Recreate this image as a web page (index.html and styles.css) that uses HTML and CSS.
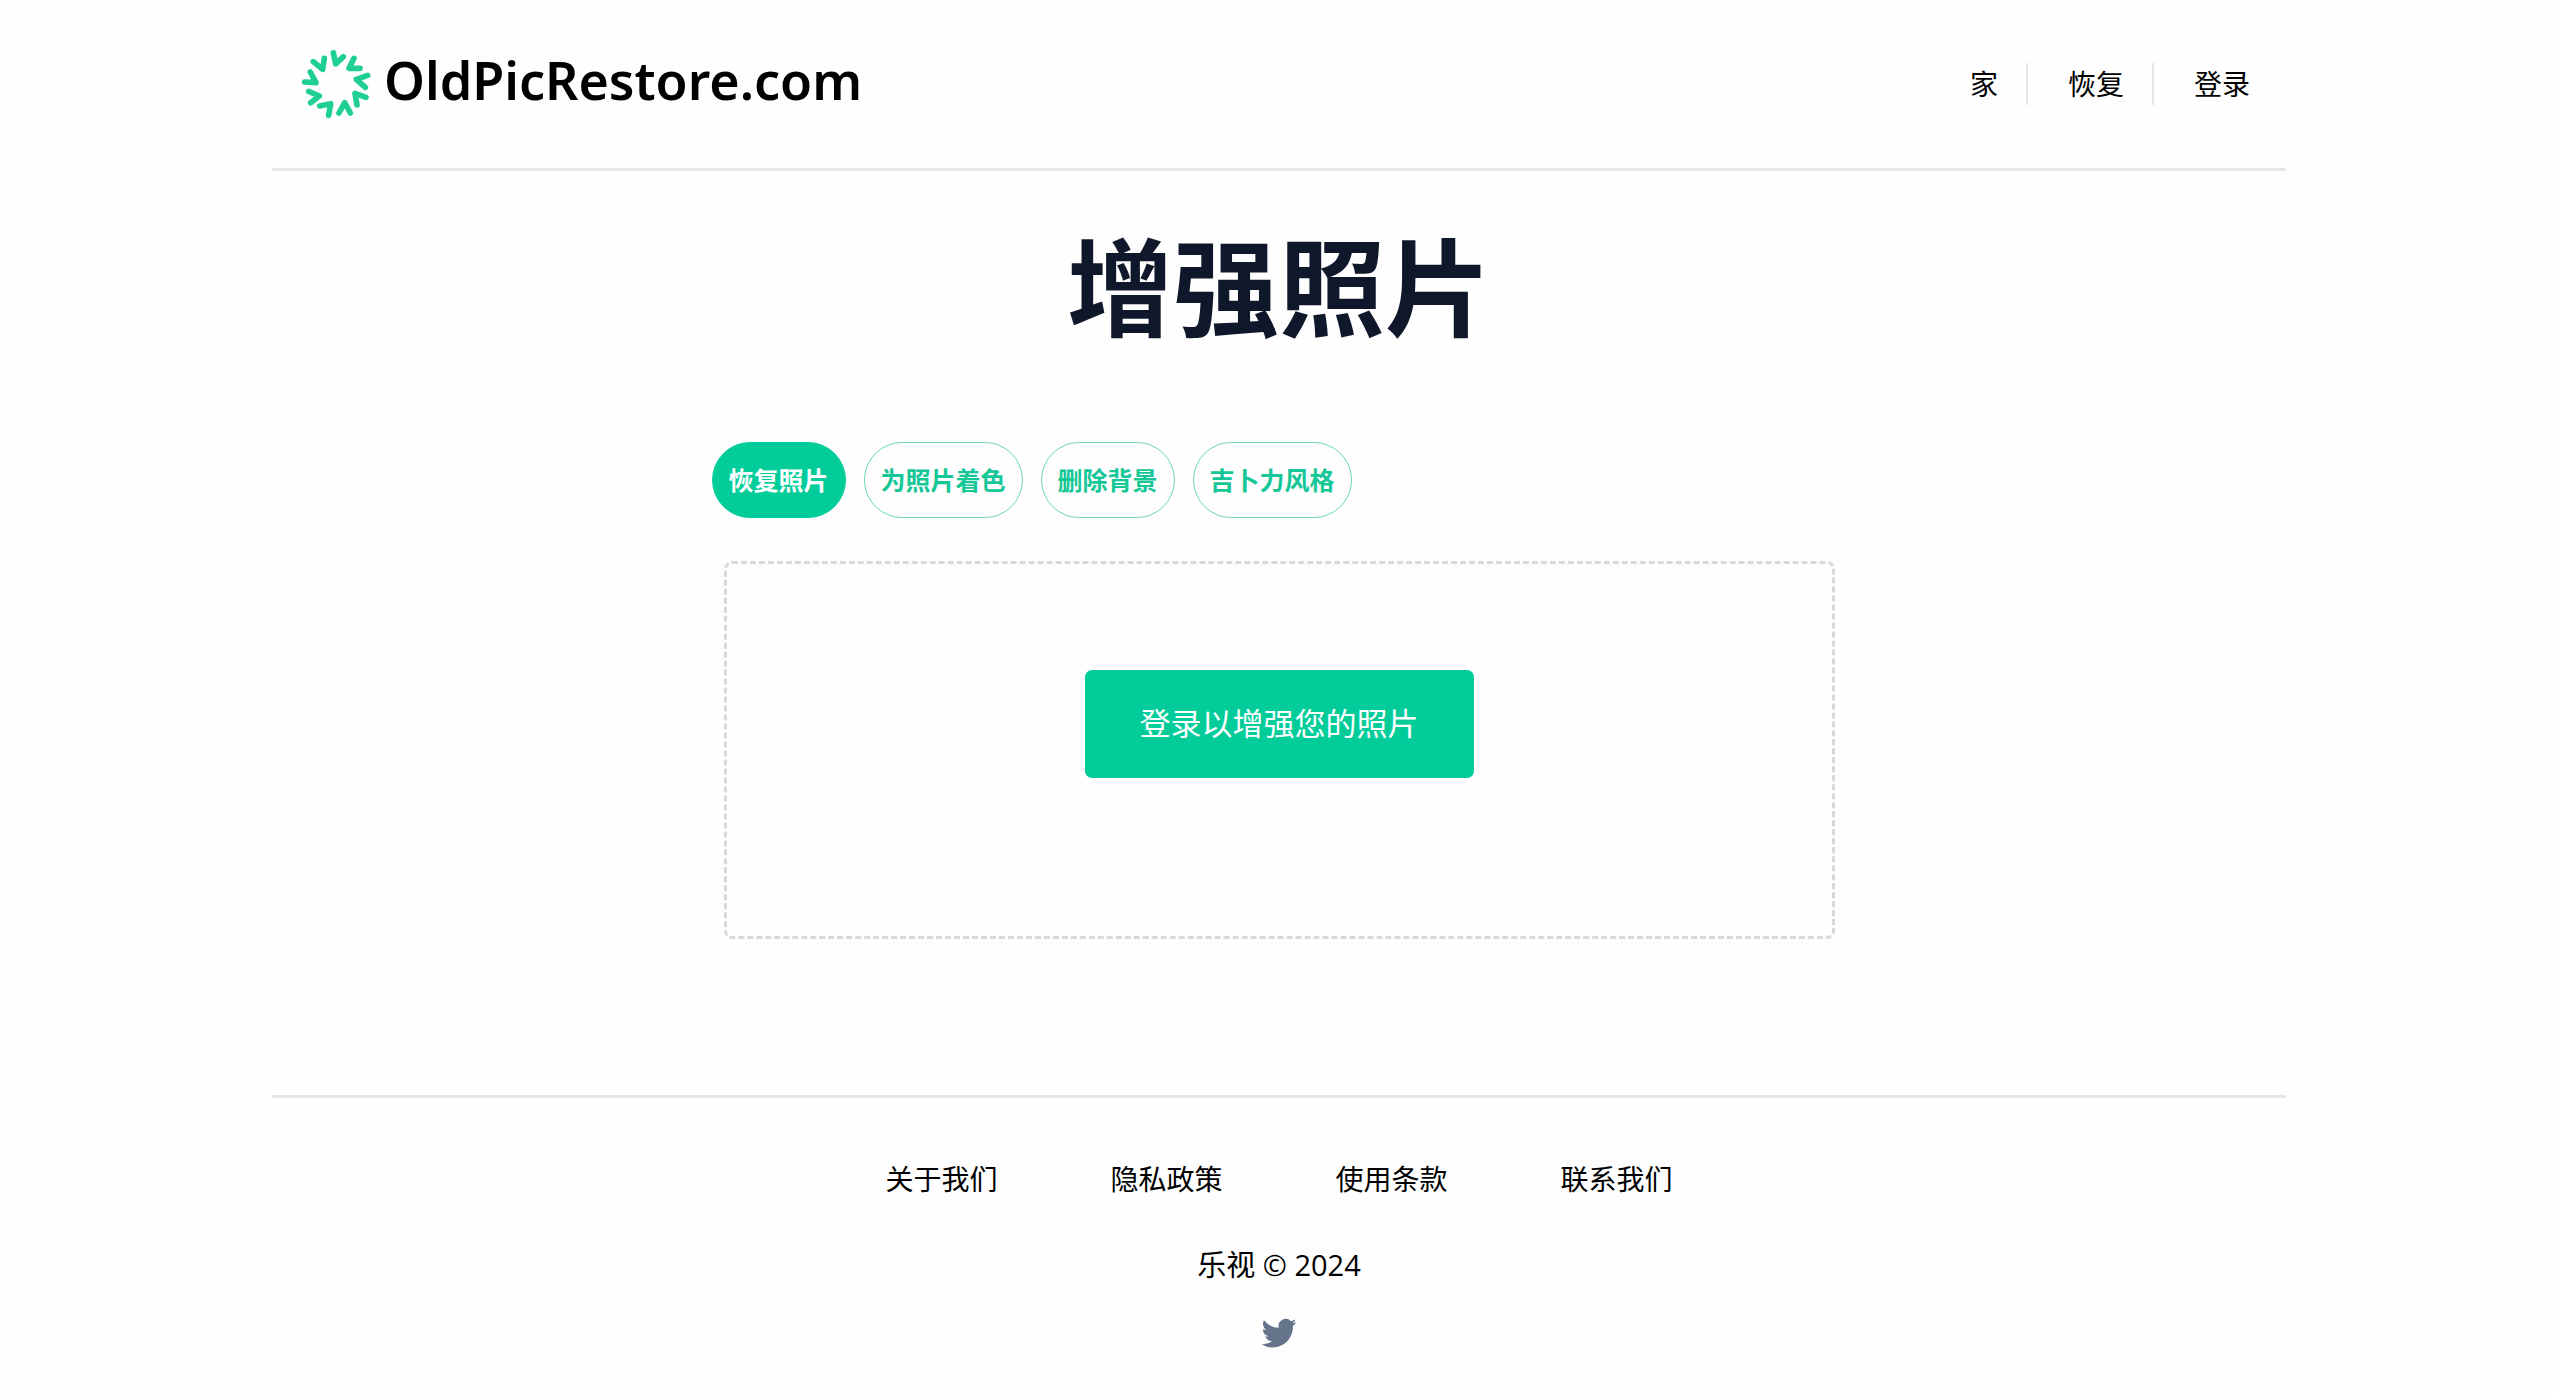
FILE: index.html
```html
<!DOCTYPE html>
<html lang="zh-CN">
<head>
<meta charset="utf-8">
<meta name="viewport" content="width=device-width, initial-scale=1">
<title>OldPicRestore.com</title>
<link rel="stylesheet" href="styles.css">
</head>
<body>
<div class="page">
  <header class="header">
    <a class="brand" href="#">
      <svg class="brand-mark" viewBox="30 36 216 216" aria-hidden="true">
        <path d="M130 50L137 84L160 62M192 67L177 97L210 97M233 118L199 130L226 154M228 184L195 172L201 207M147 231L164 200L181 231M89 210L122 203L116 238M56 166L88 180L62 200M44 138L78 140L61 108M70 77L98 100L103 67"/>
      </svg>
      <span class="brand-name">OldPicRestore.com</span>
    </a>
    <nav class="nav">
      <a class="nav-link" href="#">家</a>
      <a class="nav-link" href="#">恢复</a>
      <a class="nav-link" href="#">登录</a>
    </nav>
  </header>

  <main class="main">
    <h1 class="title">增强照片</h1>
    <div class="workspace">
      <div class="modes">
        <button class="mode mode-active" type="button">恢复照片</button>
        <button class="mode" type="button">为照片着色</button>
        <button class="mode" type="button">删除背景</button>
        <button class="mode" type="button">吉卜力风格</button>
      </div>
      <div class="dropzone">
        <button class="login" type="button">登录以增强您的照片</button>
      </div>
    </div>
  </main>

  <footer class="footer">
    <nav class="footer-links">
      <a href="#">关于我们</a>
      <a href="#">隐私政策</a>
      <a href="#">使用条款</a>
      <a href="#">联系我们</a>
    </nav>
    <p class="copyright">乐视 © 2024</p>
    <a class="social" href="#" aria-label="Twitter">
      <svg viewBox="0 0 24 24" aria-hidden="true">
        <path d="M8.29 20.251c7.547 0 11.675-6.253 11.675-11.675 0-.178 0-.355-.012-.53A8.348 8.348 0 0022 5.92a8.19 8.19 0 01-2.357.646 4.118 4.118 0 001.804-2.27 8.224 8.224 0 01-2.605.996 4.107 4.107 0 00-6.993 3.743 11.65 11.65 0 01-8.457-4.287 4.106 4.106 0 001.27 5.477A4.072 4.072 0 012.8 9.713v.052a4.105 4.105 0 003.292 4.022 4.095 4.095 0 01-1.853.07 4.108 4.108 0 003.834 2.85A8.233 8.233 0 012 18.407a11.616 11.616 0 006.29 1.84"/>
      </svg>
    </a>
  </footer>
</div>
</body>
</html>
```

FILE: styles.css
```css
* {
  box-sizing: border-box;
}

body {
  margin: 0;
  background: #fefefe;
  color: #000;
  font-family: "Open Sans", "Noto Sans CJK SC", sans-serif;
  font-size: 28px;
  line-height: 42px;
}

a {
  color: inherit;
  text-decoration: none;
}

button {
  font: inherit;
  cursor: pointer;
}

.page {
  max-width: 2014px;
  margin: 0 auto;
}

.header {
  display: flex;
  flex-wrap: wrap;
  align-items: center;
  justify-content: space-between;
  padding: 48px 36px 48px 28px;
  border-bottom: 3px solid #e5e7eb;
}

.brand {
  display: flex;
  align-items: center;
  gap: 12px;
}

.brand-mark {
  width: 72px;
  height: 72px;
  fill: none;
  stroke: #20cf94;
  stroke-width: 17;
  stroke-linecap: round;
  stroke-linejoin: round;
}

.brand-name {
  padding-bottom: 8px;
  font-family: "Noto Sans", sans-serif;
  font-size: 52px;
  font-weight: 600;
  line-height: 64px;
}

.nav {
  display: flex;
}

.nav-link {
  padding-left: 40px;
}

.nav-link:not(:last-child) {
  padding-right: 28px;
  border-right: 2px solid #e5e7eb;
}

.title {
  margin: 0;
  padding: 60px 0 99px;
  color: #0f172a;
  font-size: 106px;
  font-weight: 700;
  line-height: 112px;
  text-align: center;
}

.workspace {
  max-width: 1135px;
  margin: 0 auto;
}

.modes {
  display: flex;
  flex-wrap: wrap;
  gap: 18px;
  margin-bottom: 43px;
}

.mode {
  padding: 16px;
  border: 1px solid #6ad6b6;
  border-radius: 38px;
  background: transparent;
  color: #15c796;
  font-size: 25px;
  font-weight: 700;
  line-height: 42px;
}

.mode-active {
  border-color: #02cd9a;
  background: #02cd9a;
  color: #fff;
}

.dropzone {
  display: flex;
  justify-content: center;
  margin: 0 12px;
  padding: 106px 24px 158px;
  border: 3px dashed #d9d9d9;
  border-radius: 8px;
}

.login {
  padding: 32px 55px 34px;
  border: 0;
  border-radius: 7px;
  background: #02cd9a;
  color: #fff;
  font-size: 31px;
  line-height: 42px;
}

.footer {
  display: flex;
  flex-direction: column;
  align-items: center;
  margin-top: 156px;
  padding: 60px 0 16px;
  border-top: 3px solid #e5e7eb;
}

.footer-links {
  display: flex;
  flex-wrap: wrap;
  justify-content: center;
  gap: 24px 113px;
}

.copyright {
  margin: 44px 0 26px;
  font-size: 29px;
}

.social svg {
  display: block;
  width: 42px;
  height: 42px;
  fill: #64748b;
}
```
